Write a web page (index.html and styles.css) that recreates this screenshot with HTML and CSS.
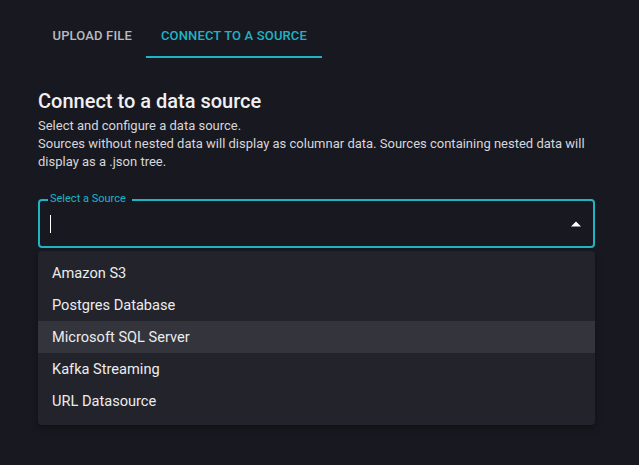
FILE: index.html
```html
<!DOCTYPE html>
<html>
<head>
<meta charset="utf-8">
<link rel="stylesheet" href="styles.css">
</head>
<body>
<div class="page">
  <div class="tabs">
    <div class="tab">Upload File</div>
    <div class="tab active">Connect to a Source</div>
  </div>
  <h2 class="title">Connect to a data source</h2>
  <p class="desc">Select and configure a data source.<br>Sources without nested data will display as columnar data. Sources containing nested data will display as a .json tree.</p>
  <div class="field">
    <fieldset class="outline"><legend>Select a Source</legend></fieldset>
    <span class="label">Select a Source</span>
    <span class="caret"></span>
    <svg class="arrow" width="10" height="6" viewBox="0 0 10 6"><path d="M0 5.5 L5 0.5 L10 5.5 Z" fill="#ffffff"/></svg>
  </div>
  <ul class="menu">
    <li class="item">Amazon S3</li>
    <li class="item">Postgres Database</li>
    <li class="item hover">Microsoft SQL Server</li>
    <li class="item">Kafka Streaming</li>
    <li class="item">URL Datasource</li>
  </ul>
</div>
</body>
</html>
```

FILE: styles.css
```css
html, body {
  margin: 0;
  padding: 0;
  background: #181920;
  height: 100%;
}
body {
  font-family: Roboto, "Liberation Sans", sans-serif;
  color: #e6e6e8;
}
.page {
  padding: 10px 44px 0 38px;
}
.tabs {
  display: flex;
  height: 48px;
}
.tab {
  box-sizing: border-box;
  height: 48px;
  padding: 4px 14.5px 0;
  display: flex;
  align-items: center;
  font-size: 13px;
  font-weight: 500;
  letter-spacing: 0.15px;
  text-transform: uppercase;
  color: #b9bac0;
  border-bottom: 2px solid transparent;
}
.tab.active {
  color: #1fb3c6;
  border-bottom-color: #1fb3c6;
}
.title {
  margin: 31px 0 0;
  font-size: 20px;
  font-weight: 500;
  line-height: 24px;
  color: #f0f0f2;
}
.desc {
  margin: 4px 0 0;
  font-size: 13px;
  line-height: 18px;
  color: #d6d6da;
}
.field {
  position: relative;
  margin-top: 29px;
  height: 48px;
}
.outline {
  position: absolute;
  inset: -5px 0 0 0;
  margin: 0;
  padding: 0 8px;
  border: 2px solid #1fb3c6;
  border-radius: 4px;
}
.outline legend {
  font-size: 11px;
  padding: 0 4px;
  visibility: hidden;
  line-height: 10px;
}
.label {
  position: absolute;
  left: 12px;
  top: -7px;
  font-size: 11px;
  line-height: 12px;
  color: #1fb3c6;
}
.caret {
  position: absolute;
  left: 12px;
  top: 15px;
  width: 1px;
  height: 18px;
  background: #ffffff;
}
.arrow {
  position: absolute;
  right: 14px;
  top: 21px;
}
.menu {
  list-style: none;
  margin: 3px 0 0;
  padding: 6px 0 8px;
  background: #23242b;
  border-radius: 4px;
  box-shadow: 0 3px 6px rgba(0, 0, 0, 0.35);
}
.item {
  height: 32px;
  line-height: 32px;
  padding: 0 14px;
  font-size: 14.6px;
  color: #ececee;
}
.item.hover {
  background: #33343c;
}
```
